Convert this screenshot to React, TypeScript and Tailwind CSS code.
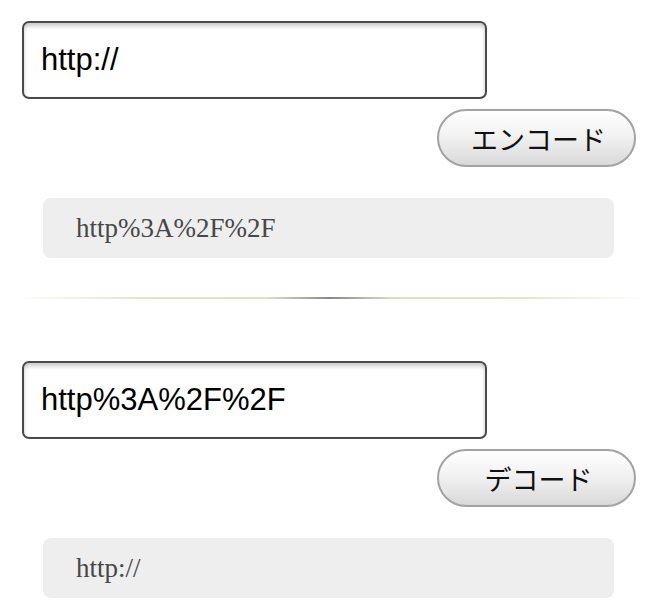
import React from "react";

function Section({ input, label, output }: { input: string; label: string; output: string }) {
  return (
    <div className="flex flex-col">
      <div className="w-[465px] h-[78px] border-2 border-[#4a4a4a] rounded-[7px] bg-white shadow-[inset_0_3px_4px_rgba(0,0,0,0.22)] flex items-center pl-[17px] pt-[1px] text-[31px] text-black font-['Liberation_Sans',Arial,sans-serif]">
        {input}
      </div>
      <div className="flex justify-end w-[614px] mt-[10px]">
        <button className="w-[199px] h-[58px] rounded-full border-2 border-[#a3a3a3] bg-[linear-gradient(to_bottom,#ffffff_0%,#f2f2f2_45%,#d9d9d9_100%)] text-[27px] leading-none text-[#111] font-['Noto_Sans_CJK_JP','Liberation_Sans',sans-serif] flex items-center justify-center pl-[4px]">
          {label}
        </button>
      </div>
      <div className="ml-[21px] mt-[31px] w-[571px] h-[60px] rounded-[8px] bg-[#eeeeee] flex items-center pl-[33px] text-[27px] text-[#474747] font-['Liberation_Serif','Times_New_Roman',serif]">
        {output}
      </div>
    </div>
  );
}

export default function App() {
  return (
    <div className="w-[660px] h-[614px] bg-white pt-[21px] pl-[22px] overflow-hidden">
      <Section input="http://" label="エンコード" output="http%3A%2F%2F" />
      <div className="-ml-[8px] mt-[39px] mb-[62px] w-[632px] h-[2px] bg-[linear-gradient(to_right,rgba(232,228,200,0)_0%,#e6e2c6_20%,#e2dec2_40%,#888_50%,#e2dec2_60%,#e6e2c6_80%,rgba(232,228,200,0)_100%)]" />
      <Section input="http%3A%2F%2F" label="デコード" output="http://" />
    </div>
  );
}
